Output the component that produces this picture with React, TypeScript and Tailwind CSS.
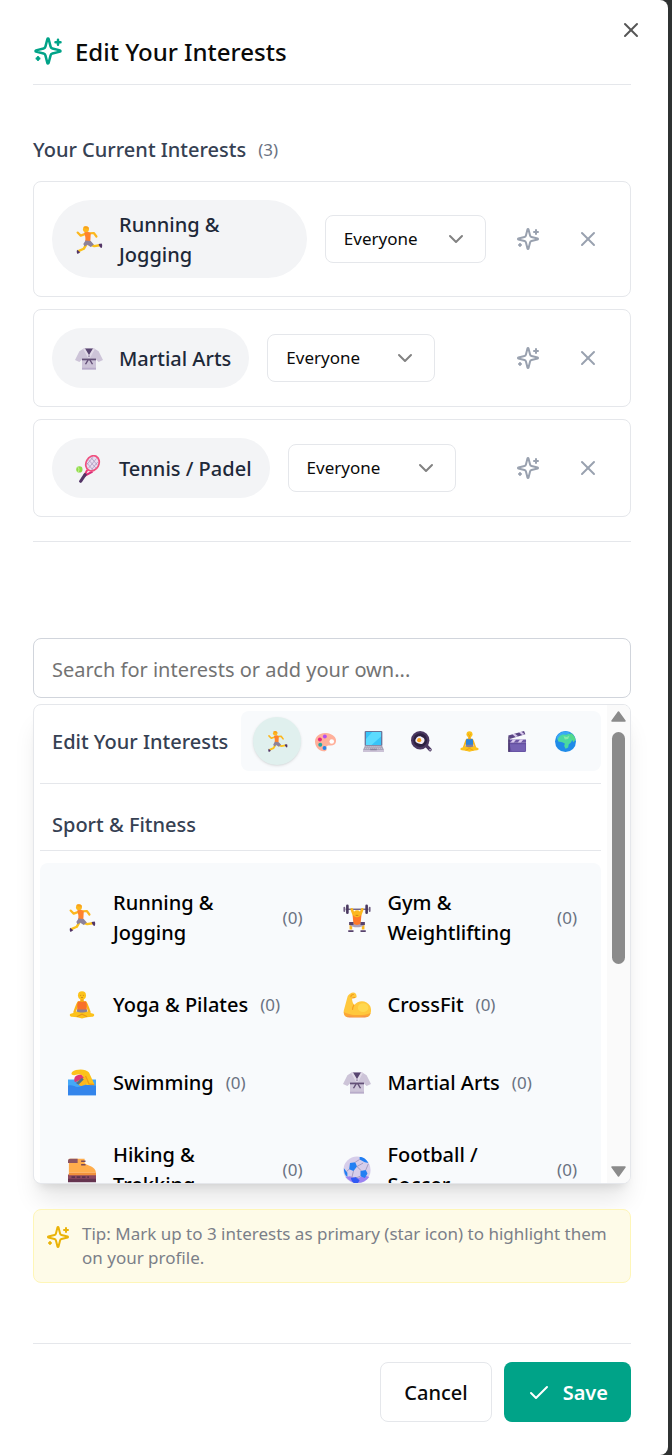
import type { ReactNode } from "react";
import { Check, ChevronDown, X } from "lucide-react";

type GlyphName =
  | "runner"
  | "gi"
  | "tennis"
  | "palette"
  | "laptop"
  | "pan"
  | "lotusBlue"
  | "lotus"
  | "clapper"
  | "globe"
  | "lifter"
  | "biceps"
  | "swimmer"
  | "boot"
  | "ball";

function lotusShapes(top: string) {
  return (
    <>
      <path d="M12 13c-2 3-2.500 6-4.500 11" stroke="#fbb61a" strokeWidth="2.800" strokeLinecap="round" fill="none" />
      <path d="M20 13c2 3 2.500 6 4.500 11" stroke="#fbb61a" strokeWidth="2.800" strokeLinecap="round" fill="none" />
      <path d="M3 26c3-.5 5-3 9-3h8c4 0 6 2.500 9 3 2 1 .5 3.500-1.500 3.500l-6 .5-5.500 1.500-5.500-1.500-6-.5c-2 0-3.500-2.500-1.500-3.500z" fill="#fcc21b" />
      <path d="M10 29.500l6-3 6 3" stroke="#e89a12" strokeWidth="1.200" fill="none" />
      <path d="M11 13c1.500-2 8.500-2 10 0 .8 3 .3 6 .5 9.500-3 1.500-8 1.500-11 0 .2-3.500-.3-6.500.5-9.500z" fill={top} />
      <path d="M10.500 21h11l.5 2.500c-3 1.500-9 1.500-12 0z" fill="#8a7f96" />
      <path d="M14 8h4v4.500h-4z" fill="#f3a916" />
      <circle cx="16" cy="5" r="4.600" fill="#fcc21b" />
      <path d="M14 5h1M17 5h1M15 7.500h2" stroke="#b86b12" strokeWidth=".8" />
    </>
  );
}

const glyphs: Record<GlyphName, ReactNode> = {
  runner: (
    <>
      <path d="M12 9L6.500 11 3 7.500" stroke="#fcb71e" strokeWidth="2.500" strokeLinecap="round" strokeLinejoin="round" fill="none" />
      <path d="M16.500 8.500l5-.5 3 4" stroke="#fcb71e" strokeWidth="2.500" strokeLinecap="round" strokeLinejoin="round" fill="none" />
      <path d="M13 21l-3 5-5.500 2.500" stroke="#fcc21b" strokeWidth="2.800" strokeLinecap="round" strokeLinejoin="round" fill="none" />
      <path d="M18 21.500l4 1.500 6-1" stroke="#fcc21b" strokeWidth="2.800" strokeLinecap="round" strokeLinejoin="round" fill="none" />
      <path d="M10.500 7.500c2-1.500 6-1 7.500 1l-.5 9.500-6-.5c1-3 .2-6-1-10z" fill="#ff822d" />
      <path d="M12 16.500l6 .5 3.500 4-3.500 3-4-2.500-3 2-1.500-3z" fill="#8d8299" />
      <path d="M2.500 27l3.500 3-3 2c-1-1-1.500-3-.5-5z" fill="#533566" />
      <path d="M27 20.500l3.500-.5c.8 1.500.8 3.500 0 5-1.500 0-3-2-3.500-4.500z" fill="#533566" />
      <circle cx="12.500" cy="3.600" r="3.400" fill="#fcb71e" />
      <path d="M9.500 1c2-1.500 6-1 6.500 2l-5-.5z" fill="#f9a01b" />
    </>
  ),
  gi: (
    <>
      <path d="M10 4h12l5 3 5 10-5 2.500-3-3V28H8V16.500l-3 3L0 17 5 7z" fill="#cdc4d8" />
      <path d="M11 4h10l-4 9h-2z" fill="#584570" />
      <path d="M9 4h2.500L17 13l-2 2zM23 4h-2.500L15 13l2 2z" fill="#e1dae8" />
      <path d="M8 15.500h16v2H8z" fill="#635077" />
      <path d="M15 17l-3 5M17 17l3 5" stroke="#635077" strokeWidth="1.600" />
      <path d="M8 26h16v2H8z" fill="#b8acca" />
    </>
  ),
  tennis: (
    <>
      <path d="M14 17l-3.500 7" stroke="#f03a7a" strokeWidth="2.400" />
      <path d="M20 19l-9.500 5" stroke="#d82a78" strokeWidth="2.400" />
      <path d="M11.500 22.500L6.500 30" stroke="#533566" strokeWidth="3.600" strokeLinecap="round" />
      <ellipse cx="20" cy="9.500" rx="7.300" ry="9" transform="rotate(28 20 9.500)" fill="#e8dcf0" stroke="#f0507f" strokeWidth="2" />
      <path d="M15 5l9 10M18 2.500l7.500 9M13.500 9l7 8M24.500 4l-9 11M20.500 2.500l-7 8.500M26 8l-7 8.500" stroke="#a592b8" strokeWidth=".8" />
      <circle cx="5" cy="16.500" r="3.600" fill="#8fdc48" />
      <path d="M3 13.800c2 1.500 2 4 .2 5.800" stroke="#d7f8b1" strokeWidth=".9" fill="none" />
    </>
  ),
  palette: (
    <>
      <path d="M17 3C8 2 0 8 0 16c0 7 5 14 13 15 4 .5 5.500-2 4.500-4.500-1-3 1-4.500 4-4.500 6 1 10-1.500 10.500-6C33 9 26 4 17 3z" fill="#ffb09b" />
      <circle cx="25.500" cy="16" r="3.500" fill="#fff" />
      <circle cx="15" cy="8.500" r="3" fill="#b34df0" />
      <circle cx="7.500" cy="13" r="3" fill="#e6287c" />
      <circle cx="8" cy="21" r="3" fill="#25a8a4" />
      <circle cx="14.500" cy="26" r="3" fill="#2783e8" />
    </>
  ),
  laptop: (
    <>
      <rect x="2.500" y="0" width="27" height="23" rx="1.500" fill="#6c7398" />
      <path d="M4.500 1.500h23v20h-23z" fill="#38c4f8" />
      <path d="M14 1.500h13.500v7L13 21.500H4.500V12z" fill="#5cdbff" />
      <path d="M3 22h26l3 7H0z" fill="#aaa4b8" />
      <path d="M4 24h24M3 26.500h26" stroke="#d7d2df" strokeWidth="1" strokeDasharray="2 1" />
      <path d="M0 29h32v3H0z" fill="#cbc2d6" />
      <path d="M11 27h10v2.500H11z" fill="#8b849d" />
    </>
  ),
  pan: (
    <>
      <path d="M23 22l6 6.500" stroke="#4a3760" strokeWidth="5" strokeLinecap="round" />
      <circle cx="29" cy="28.500" r="1.200" fill="#d8cfe4" />
      <circle cx="14" cy="14" r="14" fill="#4a3760" />
      <circle cx="14" cy="14" r="10.500" fill="#2d2141" />
      <path d="M8 11c3-5 8-3 10-1 4 2 3 7 0 9-4 2-6 0-9-1s-3-5-1-7z" fill="#f3edf5" />
      <circle cx="12.500" cy="14" r="3.200" fill="#f9a01b" />
    </>
  ),
  lotusBlue: lotusShapes("#2f83d8"),
  lotus: lotusShapes("#f8702a"),
  clapper: (
    <>
      <path d="M2 7L26 0l2 5L4 12z" fill="#5b4684" />
      <path d="M8 5l5 4 4-1-5-4zM18 2l5 4 4-1-5-4z" fill="#d8c8ed" />
      <path d="M2 13h27v5H2z" fill="#6e57a5" />
      <path d="M9 13l-4 5h5l4-5zM20 13l-4 5h5l4-5z" fill="#dac9ef" />
      <path d="M2 18h27v12a2 2 0 0 1-2 2H4a2 2 0 0 1-2-2z" fill="#6550a0" />
      <path d="M4 20h24v11H7z" fill="#7561b3" />
      <path d="M2 7l2 5v20H2z" fill="#453265" />
    </>
  ),
  globe: (
    <>
      <circle cx="16" cy="16" r="16" fill="#208be8" />
      <path d="M2 10C6 1 16-2 24 3c-5 4-14 1-19 12z" fill="#3aa9f5" />
      <path d="M7 8c3-3 6-3 9-2l5-2c5 1 8 5 8 9l-3 1-2 4-3 2-1 5-4 2-2-4 1-4-4-2-6-1-1-4z" fill="#4bd9a0" />
      <path d="M24 3c4 2 6 6 7.500 10L28 17l-2-4-4-3z" fill="#54d98c" />
      <path d="M13 8l5 1 4-2-2 5-5 1z" fill="#86eaaa" />
    </>
  ),
  lifter: (
    <>
      <path d="M3 6h26" stroke="#65567a" strokeWidth="1.500" />
      <path d="M5 2v8M27 2v8" stroke="#4a3960" strokeWidth="3" strokeLinecap="round" />
      <path d="M1.500 4v4M30.500 4v4" stroke="#705f84" strokeWidth="2" strokeLinecap="round" />
      <path d="M10 6l2.500 7M22 6l-2.500 7" stroke="#fcb71e" strokeWidth="3" strokeLinecap="round" />
      <path d="M11 22l-2 1.500V29M21 22l2 1.500V29" stroke="#fcb71e" strokeWidth="3" strokeLinejoin="round" fill="none" />
      <path d="M11 13h10l-1 11h-8z" fill="#ff782a" />
      <path d="M9 22l7 2 7-2 .5 3-5 1.500h-5l-5-1.500z" fill="#aca0ba" />
      <path d="M7 20.500h5v3.500H7zM20 20.500h5v3.500h-5zM6 30h6v2H6zM20 30h6v2h-6z" fill="#57426c" />
      <circle cx="16" cy="11" r="4" fill="#fcb71e" />
      <path d="M14.500 13h3" stroke="#b86b12" strokeWidth=".8" />
    </>
  ),
  biceps: (
    <>
      <path d="M8 3c4-3 8-1 7.500 4-2 1.500-4 1.500-5 .5-.5 3 .5 6 2.500 8.500 4-6 14-6 18 1 2.500 6 .5 13-6 13H7c-5 0-7-3-6-8L5 7c.5-2 1.500-3 3-4z" fill="#ffc83d" />
      <path d="M1 24c6 4 22 5 30.500 1-1 4-3.500 5-6.500 5H7c-5 0-6-3-6-6z" fill="#fba637" />
      <path d="M4 28.500c7 1.500 17 1.500 24 0L25 30H7z" fill="#ef7775" />
      <path d="M12.500 16c-1 1.500-2 3-1.500 5M12 4c-2 0-3 1-3 2.500M10.500 8l3-.5" stroke="#f39b1c" strokeWidth="1.200" fill="none" strokeLinecap="round" />
      <ellipse cx="23" cy="19" rx="6" ry="5" fill="#ffd84f" />
    </>
  ),
  swimmer: (
    <>
      <path d="M0 12h32v18H0z" fill="#45a8f7" />
      <path d="M5 3C9 0 20-1 24 4l6 13c-2 3-8 3-10 0L17 8c-3-2-6-2-10-1-3 0-4-2-2-4z" fill="#fcc21b" />
      <path d="M20 8l4 9 6 1" stroke="#f19a16" strokeWidth="1.500" fill="none" />
      <circle cx="16" cy="14" r="5.500" fill="#fcb71e" />
      <path d="M8 15c-3-5 2-10 8-8l2 3z" fill="#df3775" />
      <path d="M9 16l7-6 2 2-6 6z" fill="#557089" />
      <path d="M0 19c5-2 9 3 14 1s10-2 18-1v11H0z" fill="#3485eb" />
    </>
  ),
  boot: (
    <>
      <path d="M1 3h18v5c4 4 12 3 13 11H1z" fill="#ffad4c" />
      <path d="M0 5c0-2 2-2 5-2h6v5H0z" fill="#8c5462" />
      <path d="M15 6h5M15 10h5" stroke="#7a4958" strokeWidth="1.500" />
      <path d="M0 21h32v6H0z" fill="#8c4960" />
      <path d="M1 19h31v3H1z" fill="#f1913c" />
      <path d="M0 26h32v4H0z" fill="#65344f" />
      <path d="M4 24h20" stroke="#5b334f" strokeWidth="2" strokeDasharray="4 2" />
    </>
  ),
  ball: (
    <>
      <circle cx="16" cy="16" r="15.500" fill="#d6cdea" />
      <path d="M3 24c7 9 21 9 27 0l-6-2-8 4-8-3z" fill="#9b82f1" />
      <path d="M8 8l6-1 2 5-4 5-5-2zM19 1c5 0 8 3 10 7l-4-1-6-3zM20 17l6-1 2 4-3 5-5-2zM1 14l4 5v5C2 22 1 18 1 14z" fill="#227ff3" />
      <path d="M9 25l6-1 4 4-3 4c-3 0-6-2-7-7z" fill="#3159f4" />
      <path d="M16 12l5 5M16 12l7-4M12 17l-2 8M20 23l-5 2M14 7l5-3M29 9l-3 7M7 15l-3 3" stroke="#8f87b0" strokeWidth=".8" />
    </>
  ),
};

function Glyph({ name, small = false }: { name: GlyphName; small?: boolean }) {
  return (
    <svg viewBox="0 0 32 32" aria-hidden="true" className={small ? "size-[21px] shrink-0" : "size-7 shrink-0"}>
      {glyphs[name]}
    </svg>
  );
}

function Sparkles({ className }: { className: string }) {
  return (
    <svg viewBox="0 0 24 24" fill="none" stroke="currentColor" strokeWidth="2" strokeLinecap="round" strokeLinejoin="round" aria-hidden="true" className={className}>
      <path d="M9.937 15.500A2 2 0 0 0 8.500 14.063l-6.135-1.582a.5.5 0 0 1 0-.962L8.500 9.936A2 2 0 0 0 9.937 8.500l1.582-6.135a.5.5 0 0 1 .963 0L14.063 8.500A2 2 0 0 0 15.500 9.937l6.135 1.581a.5.5 0 0 1 0 .964L15.500 14.063a2 2 0 0 0-1.437 1.437l-1.582 6.135a.5.5 0 0 1-.963 0z" />
      <path d="M20 3v4M22 5h-4M4 17v2M5 18H3" />
    </svg>
  );
}

const current: { glyph: GlyphName; name: string }[] = [
  { glyph: "runner", name: "Running & Jogging" },
  { glyph: "gi", name: "Martial Arts" },
  { glyph: "tennis", name: "Tennis / Padel" },
];

const categories: { glyph: GlyphName; name: string }[] = [
  { glyph: "runner", name: "Sport & Fitness" },
  { glyph: "palette", name: "Arts" },
  { glyph: "laptop", name: "Technology" },
  { glyph: "pan", name: "Food" },
  { glyph: "lotusBlue", name: "Wellness" },
  { glyph: "clapper", name: "Entertainment" },
  { glyph: "globe", name: "Travel" },
];

const sports: { glyph: GlyphName; name: string }[] = [
  { glyph: "runner", name: "Running & Jogging" },
  { glyph: "lifter", name: "Gym & Weightlifting" },
  { glyph: "lotus", name: "Yoga & Pilates" },
  { glyph: "biceps", name: "CrossFit" },
  { glyph: "swimmer", name: "Swimming" },
  { glyph: "gi", name: "Martial Arts" },
  { glyph: "boot", name: "Hiking & Trekking" },
  { glyph: "ball", name: "Football / Soccer" },
];

function CurrentInterest({ glyph, name }: { glyph: GlyphName; name: string }) {
  return (
    <li className="flex items-center gap-[18px] rounded-lg border border-gray-200 p-[18px]">
      <div className="flex min-w-0 flex-1 items-center gap-[18px]">
        <div className="flex min-h-[60px] min-w-0 items-center gap-4 rounded-[39px] bg-gray-100 pt-[10px] pr-[18px] pb-2 pl-[23px]">
          <Glyph name={glyph} />
          <span className="text-xl leading-[30px] font-medium text-gray-800">{name}</span>
        </div>
        <div className="relative w-[168px] min-w-[161px]">
          <select aria-label={"Who can see " + name} className="h-12 w-full appearance-none rounded-lg border border-gray-200 bg-white pl-[18px] text-[17px] text-neutral-950">
            <option>Everyone</option>
            <option>Friends</option>
          </select>
          <ChevronDown className="pointer-events-none absolute top-3 right-[18px] size-6 text-[#828282]" />
        </div>
      </div>
      <div className="flex gap-3 text-gray-400">
        <button type="button" aria-label={"Mark " + name + " as primary"} className="flex size-12 items-center justify-center">
          <Sparkles className="size-6" />
        </button>
        <button type="button" aria-label={"Remove " + name} className="flex size-12 items-center justify-center">
          <X className="size-6" />
        </button>
      </div>
    </li>
  );
}

export default function App() {
  return (
    <div className="min-h-screen bg-[#2f3232] pr-1 font-['Noto_Sans','Open_Sans',sans-serif]">
      <main role="dialog" aria-labelledby="title" className="relative min-h-screen rounded-r-lg bg-white pr-[37px] pb-[33px] pl-[33px]">
        <header className="flex h-[85px] items-end gap-3 border-b border-gray-200 pb-[14px]">
          <Sparkles className="mb-1 size-[30px] text-[#00a388]" />
          <h1 id="title" className="text-2xl leading-9 font-medium text-neutral-950">Edit Your Interests</h1>
        </header>
        <button type="button" aria-label="Close" className="absolute top-[18px] right-[25px] text-[#555]">
          <X className="size-6" />
        </button>

        <section className="border-b border-gray-200 pt-[50px] pb-6">
          <h2 className="flex items-center gap-3 text-xl leading-[30px] font-medium text-gray-700">
            Your Current Interests
            <span className="text-[17px] font-normal text-gray-500">(3)</span>
          </h2>
          <ul className="mt-4 flex flex-col gap-3">
            {current.map((item) => (
              <CurrentInterest key={item.name} glyph={item.glyph} name={item.name} />
            ))}
          </ul>
        </section>

        <section className="pt-24">
          <input
            type="text"
            aria-label="Search for interests"
            placeholder="Search for interests or add your own..."
            className="h-[60px] w-full rounded-lg border border-gray-300 px-[18px] pt-[2px] text-xl text-gray-800 placeholder:text-[#737373]"
          />
          <div className="mt-[6px] flex h-[480px] overflow-hidden rounded-lg border border-gray-200 bg-white shadow-xl">
            <div className="min-w-0 flex-1 overflow-y-auto p-[6px] [scrollbar-width:none]">
              <div className="flex items-center justify-between border-b border-gray-200 pb-3 pl-3">
                <h3 className="pt-[2px] text-xl leading-[30px] font-medium whitespace-nowrap text-gray-700">Edit Your Interests</h3>
                <div className="flex h-[60px] w-[360px] shrink-0 items-center rounded-lg bg-slate-50 pl-3">
                  {categories.map((item, index) => (
                    <button
                      key={item.name}
                      type="button"
                      aria-label={item.name}
                      className={
                        index === 0
                          ? "flex size-12 items-center justify-center rounded-full bg-[#e0f0ee] shadow-sm"
                          : "flex size-12 items-center justify-center rounded-full"
                      }
                    >
                      <Glyph name={item.glyph} small />
                    </button>
                  ))}
                </div>
              </div>
              <h4 className="border-b border-gray-200 pt-[26px] pb-[10px] pl-3 text-xl leading-[30px] font-medium text-gray-700">Sport &amp; Fitness</h4>
              <div className="mt-3 grid grid-cols-2 gap-x-3 gap-y-[18px] rounded-lg bg-slate-50 px-3 py-4">
                {sports.map((item) => (
                  <button key={item.name} type="button" className="flex min-h-[60px] items-center gap-[17px] py-[9px] pr-3 pl-4 text-left">
                    <Glyph name={item.glyph} />
                    <span className="flex flex-1 items-center gap-3">
                      <span className="text-xl leading-[30px] font-medium text-black">{item.name}</span>
                      <span className="text-[17px] text-gray-500">(0)</span>
                    </span>
                  </button>
                ))}
              </div>
            </div>
            <div aria-hidden="true" className="flex w-[23px] shrink-0 flex-col items-center justify-between bg-[#fafafa] py-[6px]">
              <div className="flex flex-col items-center gap-[10px]">
                <svg viewBox="0 0 15 11" className="h-[11px] w-[15px]">
                  <path d="M7.500 1L14 10H1z" fill="#8b8b8b" stroke="#8b8b8b" strokeWidth="1.500" strokeLinejoin="round" />
                </svg>
                <div className="h-[232px] w-[13px] rounded-full bg-[#8b8b8b]" />
              </div>
              <svg viewBox="0 0 15 11" className="h-[11px] w-[15px]">
                <path d="M7.500 10L14 1H1z" fill="#8b8b8b" stroke="#8b8b8b" strokeWidth="1.500" strokeLinejoin="round" />
              </svg>
            </div>
          </div>
        </section>

        <p className="mt-[25px] flex items-start gap-3 rounded-lg border border-[#fef6b8] bg-[#fefbe8] px-3 py-3 text-[17px] leading-6 text-[#7b7f88]">
          <Sparkles className="mt-[3px] size-6 shrink-0 text-[#eab308]" />
          <span>Tip: Mark up to 3 interests as primary (star icon) to highlight them on your profile.</span>
        </p>

        <footer className="mt-[60px] flex justify-end gap-3 border-t border-gray-200 pt-[18px]">
          <button type="button" className="h-[60px] rounded-lg border border-gray-200 px-[23px] pt-[2px] text-xl font-medium text-neutral-950">Cancel</button>
          <button type="button" className="flex h-[60px] items-center gap-3 rounded-lg bg-[#00a388] px-[23px] pt-[2px] text-xl font-semibold text-white">
            <Check className="size-6" />
            Save
          </button>
        </footer>
      </main>
    </div>
  );
}
